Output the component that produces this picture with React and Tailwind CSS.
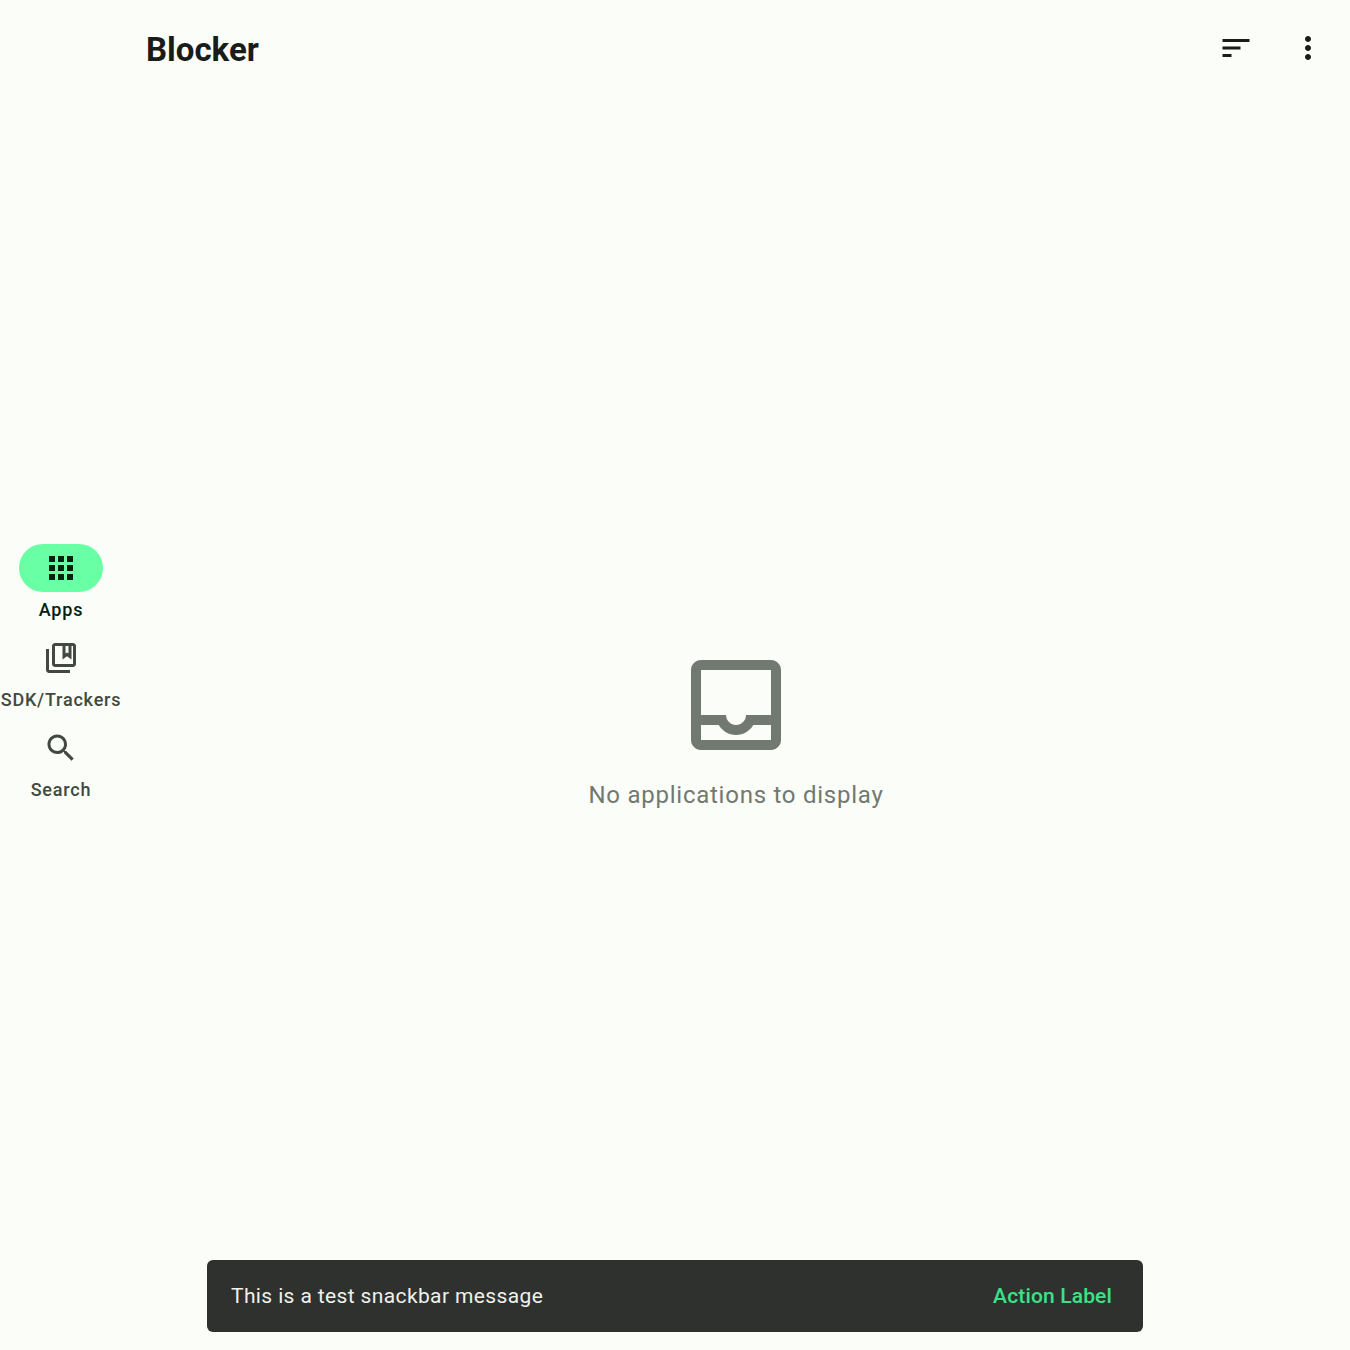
const ICONS = {
  apps: "M4 8h4V4H4v4zm6 12h4v-4h-4v4zm-6 0h4v-4H4v4zm0-6h4v-4H4v4zm6 0h4v-4h-4v4zm6-10v4h4V4h-4zm-6 4h4V4h-4v4zm6 6h4v-4h-4v4zm0 6h4v-4h-4v4z",
  bookmarks: "M4 6H2v14c0 1.100.9 2 2 2h14v-2H4V6zM20 2H8c-1.100 0-2 .9-2 2v12c0 1.100.9 2 2 2h12c1.100 0 2-.9 2-2V4c0-1.100-.9-2-2-2zm0 14H8V4h5v9l3-2.250L19 13V4h1v12zm-5-7.250L15 4h2v5l-1-.75-1 .75z",
  search: "M15.500 14h-.79l-.28-.27C15.410 12.590 16 11.110 16 9.500 16 5.910 13.090 3 9.500 3S3 5.910 3 9.500 5.910 16 9.500 16c1.610 0 3.090-.59 4.230-1.570l.27.28v.79l5 4.990L20.490 19l-4.990-5zm-6 0C7.010 14 5 11.990 5 9.500S7.010 5 9.500 5 14 7.010 14 9.500 11.990 14 9.500 14z",
  sort: "M3 18h6v-2H3v2zM3 6v2h18V6H3zm0 7h12v-2H3v2z",
  more: "M12 8c1.100 0 2-.9 2-2s-.9-2-2-2-2 .9-2 2 .9 2 2 2zm0 2c-1.100 0-2 .9-2 2s.9 2 2 2 2-.9 2-2-.9-2-2-2zm0 6c-1.100 0-2 .9-2 2s.9 2 2 2 2-.9 2-2-.9-2-2-2z",
  inbox: "M19 3H5c-1.100 0-2 .9-2 2v14c0 1.100.9 2 2 2h14c1.100 0 2-.9 2-2V5c0-1.100-.9-2-2-2zm0 16H5v-3h3.560c.69 1.190 1.970 2 3.450 2s2.750-.81 3.450-2H19v3zm0-5h-4.990c0 1.100-.9 2-2 2s-2-.9-2-2H5V5h14v9z",
};

function Icon({ name, className }) {
  return (
    <svg viewBox="0 0 24 24" fill="currentColor" fillRule="evenodd" className={className} aria-hidden="true">
      <path d={ICONS[name]} />
    </svg>
  );
}

function RailItem({ icon, label, selected }) {
  return (
    <button className={`flex h-[90px] w-[122px] flex-col items-center ${selected ? "text-[#002110]" : "text-[#414941]"}`}>
      <span className={`flex h-12 w-[84px] items-center justify-center rounded-full ${selected ? "bg-[#69ffa5]" : ""}`}>
        <Icon name={icon} className="size-9" />
      </span>
      <span className="mt-1.5 text-[18px] leading-6 font-medium tracking-[0.8px] whitespace-nowrap">{label}</span>
    </button>
  );
}

export default function App() {
  return (
    <div className="relative flex h-[1350px] w-[1350px] overflow-hidden bg-[#fbfdf8] font-[Roboto,sans-serif]">
      <nav className="flex w-[122px] shrink-0 flex-col justify-center pt-2">
        <RailItem icon="apps" label="Apps" selected />
        <RailItem icon="bookmarks" label="SDK/Trackers" />
        <RailItem icon="search" label="Search" />
      </nav>
      <div className="flex flex-1 flex-col">
        <header className="flex h-24 items-center pr-6 pl-6 text-[#191c19]">
          <h1 className="flex-1 pt-1 text-[33px] font-bold">Blocker</h1>
          <button className="mr-9"><Icon name="sort" className="size-9" /></button>
          <button><Icon name="more" className="size-9" /></button>
        </header>
        <main className="flex flex-1 flex-col items-center pt-[549px] text-[#717971]">
          <Icon name="inbox" className="size-[120px]" />
          <p className="mt-3 text-[24px] leading-9 tracking-[0.75px]">No applications to display</p>
        </main>
      </div>
      <div className="absolute top-[1260px] left-[207px] flex h-[72px] w-[936px] items-center justify-between rounded-[6px] bg-[#2e312e] pt-0.5 pr-[31px] pl-6">
        <span className="text-[21px] tracking-[0.375px] text-[#f0f1ec]">This is a test snackbar message</span>
        <button className="text-[21px] font-medium tracking-[0.15px] text-[#3de188]">Action Label</button>
      </div>
    </div>
  );
}
